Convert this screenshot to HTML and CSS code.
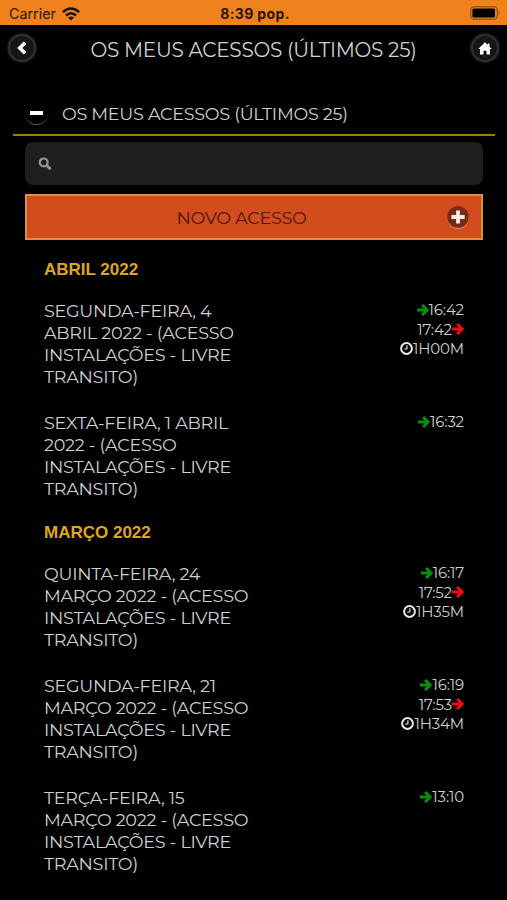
FILE: index.html
```html
<!DOCTYPE html>
<html lang="pt">

<head>
    <meta charset="utf-8">
    <title>Os meus acessos</title>
    <link rel="stylesheet" href="styles.css">
</head>

<body>
    <svg class="defs" width="0" height="0">
        <symbol id="arrow" viewBox="0 0 12 12">
            <path d="M0 6H9.5M5.1 1L10.1 6L5.1 11" fill="none" stroke="currentColor" stroke-width="3" />
        </symbol>
        <symbol id="clock" viewBox="0 0 13 13">
            <circle cx="6.5" cy="6.5" r="5.4" fill="none" stroke="currentColor" stroke-width="2" />
            <path d="M6.9 3.3V7H4.2" fill="none" stroke="currentColor" stroke-width="1.2" />
        </symbol>
    </svg>

    <div class="status-bar">
        <div class="carrier">
            <span>Carrier</span>
            <svg width="18" height="14" viewBox="0 0 18 14" fill="none" stroke="#180c02" stroke-width="2.5">
                <path d="M0.9 5.2Q9 -2.2 17.1 5.2" />
                <path d="M4 8.5Q9 4 14 8.5" />
                <path d="M9 13.6L6 10.6Q9 8.2 12 10.6Z" fill="#180c02" stroke="none" />
            </svg>
        </div>
        <div class="clock">8:39 pop.</div>
        <svg class="battery" width="31" height="14" viewBox="0 0 31 14">
            <rect x="0.7" y="0.7" width="26.6" height="12.6" rx="3.5" fill="none" stroke="#a0560f" stroke-width="1.4" />
            <rect x="2.4" y="2.4" width="22.6" height="9.2" rx="1.5" fill="#000" />
            <path d="M28.6 4.8Q30.6 7 28.6 9.2Z" fill="#a0560f" />
        </svg>
    </div>

    <div class="header">
        <a class="round-button">
            <svg width="12" height="14" viewBox="0 0 12 14">
                <path d="M9 1.8L3.8 7L9 12.2" fill="none" stroke="#fff" stroke-width="3.6" />
            </svg>
        </a>
        <h1>OS MEUS ACESSOS (ÚLTIMOS 25)</h1>
        <a class="round-button">
            <svg width="14" height="13" viewBox="0 0 14 13">
                <path d="M7 0.3L9.7 3V1.5H11.5V4.8L13.8 7.1H12V12.6H8.5V8.8H5.5V12.6H2V7.1H0.2Z" fill="#fff" />
            </svg>
        </a>
    </div>

    <div class="section-title">
        <span class="minus"></span>
        <h2>OS MEUS ACESSOS (ÚLTIMOS 25)</h2>
    </div>

    <div class="content">
        <div class="search">
            <svg width="14" height="14" viewBox="0 0 14 14" fill="none" stroke="#969696">
                <circle cx="5.7" cy="5.4" r="3.9" stroke-width="2.2" />
                <path d="M8.6 8.3L12.6 12.2" stroke-width="2.8" />
            </svg>
        </div>

        <div class="new-access">
            <span>NOVO ACESSO</span>
            <svg width="22" height="23" viewBox="0 0 22 23">
                <circle cx="11" cy="12" r="10.8" fill="#e28d6b" />
                <circle cx="11" cy="11" r="10.8" fill="#7a2a10" />
                <path d="M11 4.4V17.6M4.4 11H17.6" stroke="#f3ece8" stroke-width="3.8" />
            </svg>
        </div>

        <h3>ABRIL 2022</h3>
        <div class="entry">
            <div class="name">SEGUNDA-FEIRA, 4<br>ABRIL 2022 - (ACESSO<br>INSTALAÇÕES - LIVRE<br>TRANSITO)</div>
            <div class="times">
                <div><svg class="in"><use href="#arrow" /></svg>16:42</div>
                <div>17:42<svg class="out"><use href="#arrow" /></svg></div>
                <div><svg class="total"><use href="#clock" /></svg>1H00M</div>
            </div>
        </div>
        <div class="entry">
            <div class="name">SEXTA-FEIRA, 1 ABRIL<br>2022 - (ACESSO<br>INSTALAÇÕES - LIVRE<br>TRANSITO)</div>
            <div class="times">
                <div><svg class="in"><use href="#arrow" /></svg>16:32</div>
            </div>
        </div>

        <h3>MARÇO 2022</h3>
        <div class="entry">
            <div class="name">QUINTA-FEIRA, 24<br>MARÇO 2022 - (ACESSO<br>INSTALAÇÕES - LIVRE<br>TRANSITO)</div>
            <div class="times">
                <div><svg class="in"><use href="#arrow" /></svg>16:17</div>
                <div>17:52<svg class="out"><use href="#arrow" /></svg></div>
                <div><svg class="total"><use href="#clock" /></svg>1H35M</div>
            </div>
        </div>
        <div class="entry">
            <div class="name">SEGUNDA-FEIRA, 21<br>MARÇO 2022 - (ACESSO<br>INSTALAÇÕES - LIVRE<br>TRANSITO)</div>
            <div class="times">
                <div><svg class="in"><use href="#arrow" /></svg>16:19</div>
                <div>17:53<svg class="out"><use href="#arrow" /></svg></div>
                <div><svg class="total"><use href="#clock" /></svg>1H34M</div>
            </div>
        </div>
        <div class="entry">
            <div class="name">TERÇA-FEIRA, 15<br>MARÇO 2022 - (ACESSO<br>INSTALAÇÕES - LIVRE<br>TRANSITO)</div>
            <div class="times">
                <div><svg class="in"><use href="#arrow" /></svg>13:10</div>
            </div>
        </div>
    </div>
</body>

</html>
```
FILE: styles.css
```css
* {
    box-sizing: border-box;
}

body {
    margin: 0;
    background-color: #000;
    color: #cfcfcf;
    font-family: Montserrat, Inter, sans-serif;
    font-weight: 400;
    overflow: hidden;
}

h1,
h2,
h3 {
    margin: 0;
    font-weight: 400;
    white-space: nowrap;
}

svg {
    display: block;
    flex: none;
}

.defs {
    position: absolute;
}

.status-bar {
    height: 25px;
    padding: 2px 6px 0 9px;
    display: grid;
    grid-template-columns: 1fr auto 1fr;
    align-items: center;
    background-color: #f0821d;
    color: #2a1504;
    font-family: Inter, sans-serif;
    font-size: 14.3px;
    font-weight: 400;
}

.carrier {
    display: flex;
    align-items: center;
    gap: 6px;
}

.clock {
    font-weight: 700;
    font-size: 14px;
    letter-spacing: 0.4px;
}

.battery {
    justify-self: end;
    margin-top: -1px;
}

.header {
    height: 50px;
    padding: 0 8px;
    display: flex;
    align-items: center;
    justify-content: space-between;
}

.header h1 {
    font-size: 20px;
    letter-spacing: -0.27px;
}

.round-button {
    width: 28px;
    height: 28px;
    margin-top: -4px;
    border-radius: 50%;
    border: 2px solid #303030;
    background-color: #161616;
    box-shadow: 0 0 2px 1px #1c1c1c;
    display: flex;
    align-items: center;
    justify-content: center;
}

.section-title {
    height: 43px;
    margin: 18px 12px 0 13px;
    padding-left: 12px;
    border-bottom: 2px solid #a8760f;
    display: flex;
    align-items: center;
}

.section-title h2 {
    margin-left: 14px;
    font-size: 17.6px;
    letter-spacing: -0.28px;
}

.minus {
    width: 23px;
    height: 23px;
    border-radius: 50%;
    border-bottom: 1.5px solid #555;
    display: flex;
    align-items: center;
    justify-content: center;
}

.minus::before {
    content: "";
    width: 13px;
    height: 4px;
    background-color: #fff;
}

.content {
    margin: 6px 24px 0 25px;
}

.search {
    height: 43px;
    padding-left: 13px;
    border-radius: 8px;
    background-color: #1e1e1e;
    display: flex;
    align-items: center;
}

.new-access {
    height: 46px;
    margin: 9px 0;
    padding: 0 12px;
    border: 2px solid #d9943a;
    background-color: #d24c1d;
    color: #4a180a;
    display: flex;
    align-items: center;
    font-size: 17.6px;
    letter-spacing: -0.28px;
}

.new-access span {
    flex: 1;
    padding-right: 3px;
    text-align: center;
}

.content h3 {
    height: 39px;
    padding-left: 19px;
    line-height: 41px;
    color: #dfa51c;
    font-family: "Liberation Sans", Arial, sans-serif;
    font-size: 17px;
    font-weight: 700;
}

.entry {
    height: 112px;
    padding: 12px 19px;
    display: flex;
    justify-content: space-between;
}

.name {
    font-size: 17.6px;
    letter-spacing: -0.28px;
    line-height: 22px;
    white-space: nowrap;
}

.times {
    font-size: 15px;
    letter-spacing: -0.15px;
    line-height: 19.5px;
}

.times div {
    display: flex;
    align-items: center;
    justify-content: flex-end;
}

.times svg {
    width: 12px;
    height: 12px;
}

.times .in {
    color: #0f8a12;
}

.times .out {
    color: #f00d0d;
}

.times .total {
    width: 13px;
    height: 13px;
    color: #e8e8e8;
}
```
